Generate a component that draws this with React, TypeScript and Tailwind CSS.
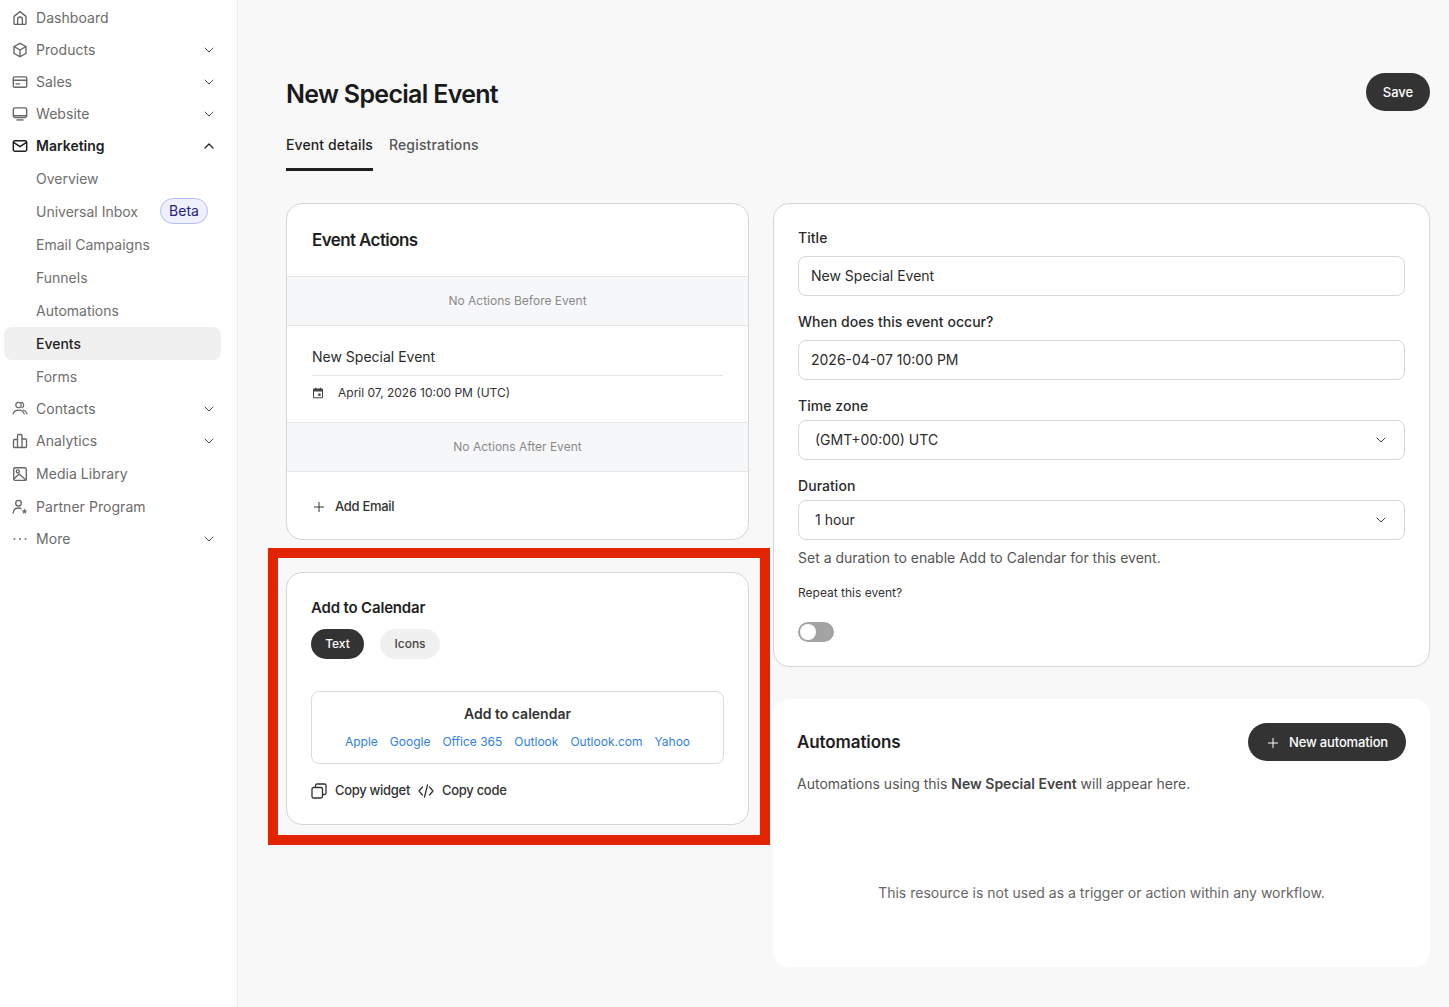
import { ChevronDown, ChevronUp, Plus } from "lucide-react";
import type { ReactNode } from "react";

const ic = {
  width: 16,
  height: 16,
  viewBox: "0 0 16 16",
  fill: "none",
  stroke: "currentColor",
  strokeWidth: 1.35,
  strokeLinecap: "round" as const,
  strokeLinejoin: "round" as const,
};

const HomeIcon = () => (
  <svg {...ic}>
    <path d="M2 6.400 8 1.600l6 4.800v7a1 1 0 0 1-1 1H3a1 1 0 0 1-1-1z" />
    <path d="M5.600 14.400V9.400a2.400 2.400 0 0 1 4.800 0v5" />
  </svg>
);
const BoxIcon = () => (
  <svg {...ic}>
    <path d="M8 1.300 14 4.500v7L8 14.700l-6-3.200v-7z" />
    <path d="M2.200 4.700 8 8l5.800-3.300M8 8v6.500" />
  </svg>
);
const CardIcon = () => (
  <svg {...ic}>
    <rect x="1.300" y="2.800" width="13.400" height="10.400" rx="1.200" />
    <path d="M1.300 6.200h13.400M4 9.800h3.600" />
  </svg>
);
const MonitorIcon = () => (
  <svg {...ic}>
    <rect x="1.300" y="1.800" width="13.400" height="9.800" rx="1.800" />
    <path d="M1.500 9.700h13" strokeWidth={1.6} />
    <path d="M5.200 13.900h5.600" strokeWidth={1.9} stroke="#888" />
  </svg>
);
const MailIcon = () => (
  <svg {...ic} strokeWidth={1.5}>
    <rect x="1.300" y="2.800" width="13.400" height="10.400" rx="1.600" />
    <path d="M1.600 4.300 8 8.700l6.400-4.400" />
  </svg>
);
const ContactsIcon = () => (
  <svg {...ic} strokeWidth={1.15}>
    <circle cx="6.500" cy="4" r="2.700" />
    <path d="M9.300 1.400a2.700 2.700 0 0 1 .7 5.200" />
    <path d="M1 13c.8-2.500 3-3.900 5.500-3.900 2.700 0 4.800 1.300 5.700 3.700" />
    <path d="M11.400 9c1.600.6 2.900 1.900 3.600 3.900" />
  </svg>
);
const AnalyticsIcon = () => (
  <svg {...ic}>
    <path d="M5.500 14.500h-3a1 1 0 0 1-1-1V7.500a1 1 0 0 1 1-1h3" />
    <rect x="5.500" y="1.500" width="4.500" height="13" rx="1.200" />
    <path d="M10 6h3.500a1 1 0 0 1 1 1v6.500a1 1 0 0 1-1 1H10" />
  </svg>
);
const MediaIcon = () => (
  <svg {...ic}>
    <rect x="1.700" y="1.700" width="12.600" height="12.600" rx="1.400" />
    <circle cx="5.800" cy="5.400" r="1.500" />
    <path d="M2 12.800 7.200 8l6.800 6" />
  </svg>
);
const PartnerIcon = () => (
  <svg {...ic}>
    <circle cx="6.500" cy="4.200" r="2.800" />
    <path d="M1.200 14c.2-3 2.400-5 5.300-5 .9 0 1.800.2 2.500.6" />
    <path
      d="m12.500 10 .7 1.500 1.600.2-1.200 1.100.3 1.600-1.400-.8-1.400.8.3-1.600-1.200-1.100 1.600-.2z"
      fill="currentColor"
      strokeWidth={0.4}
    />
  </svg>
);
const DotsIcon = () => (
  <svg width="16" height="16" viewBox="0 0 16 16" fill="#777">
    <circle cx="2.500" cy="8" r="1" />
    <circle cx="8" cy="8" r="1" />
    <circle cx="13.500" cy="8" r="1" />
  </svg>
);

type RowProps = { label: string; icon?: ReactNode; chevron?: boolean; tall?: boolean };

function NavRow({ label, icon, chevron, tall }: RowProps) {
  return (
    <div className={`flex items-center pr-5 pl-3 text-[#6b6b6b] ${tall ? "h-[33px]" : "h-8"}`}>
      <span className="flex w-6 shrink-0 items-center text-[#666]">{icon}</span>
      <span className="flex-1 text-sm tracking-[0.05px]">{label}</span>
      {chevron && <ChevronDown size={16} strokeWidth={1.5} className="text-[#555]" />}
    </div>
  );
}

function SubRow({ label, active, children }: { label: string; active?: boolean; children?: ReactNode }) {
  return (
    <div
      className={`mr-4 ml-1 flex h-[33px] items-center rounded-lg pl-8 text-sm ${
        active ? "bg-[#f0f0f0] font-medium text-[#1f1f1f]" : "text-[#6f6f6f]"
      }`}
    >
      {label}
      {children}
    </div>
  );
}

function Sidebar() {
  return (
    <aside className="w-[238px] shrink-0 border-r border-[#ededed] bg-white pt-[2px]">
      <NavRow label="Dashboard" icon={<HomeIcon />} />
      <NavRow label="Products" icon={<BoxIcon />} chevron />
      <NavRow label="Sales" icon={<CardIcon />} chevron />
      <NavRow label="Website" icon={<MonitorIcon />} chevron />
      <div className="flex h-8 items-center pr-5 pl-3 text-[#1f1f1f]">
        <span className="flex w-6 shrink-0 items-center">
          <MailIcon />
        </span>
        <span className="flex-1 text-sm font-semibold">Marketing</span>
        <ChevronUp size={16} strokeWidth={1.8} />
      </div>
      <SubRow label="Overview" />
      <SubRow label="Universal Inbox">
        <span className="mb-[1px] ml-[22px] flex h-[26px] w-12 items-center justify-center rounded-full border border-[#b4bdf5] bg-[#eef0fe] text-sm text-[#27237e]">
          Beta
        </span>
      </SubRow>
      <SubRow label="Email Campaigns" />
      <SubRow label="Funnels" />
      <SubRow label="Automations" />
      <SubRow label="Events" active />
      <SubRow label="Forms" />
      <NavRow label="Contacts" icon={<ContactsIcon />} chevron />
      <NavRow label="Analytics" icon={<AnalyticsIcon />} chevron />
      <NavRow label="Media Library" icon={<MediaIcon />} tall />
      <NavRow label="Partner Program" icon={<PartnerIcon />} tall />
      <NavRow label="More" icon={<DotsIcon />} chevron />
    </aside>
  );
}

function EventActions() {
  return (
    <div className="overflow-hidden rounded-[16px] border border-[#d6d6d6] bg-white">
      <div className="flex h-[72px] items-center px-[25px] pt-[2px] text-[17px] font-semibold tracking-[-0.6px] text-[#1f1f1f]">
        Event Actions
      </div>
      <div className="flex h-[50px] items-center justify-center border-y border-[#e5e5e5] bg-[#f6f7f9] text-xs text-[#8a8a8a]">
        No Actions Before Event
      </div>
      <div className="h-[96px] px-[25px]">
        <div className="flex h-[50px] items-end border-b border-[#e5e5e5] pb-[8px] text-sm text-[#2b2b2b]">
          New Special Event
        </div>
        <div className="flex h-[34px] items-center gap-[14px] text-xs text-[#333]">
          <svg width="12" height="12" viewBox="0 0 12 12">
            <path
              d="M2 1.500h1V.8h1.200v.7h3.600V.8H9v.7h1a1 1 0 0 1 1 1v7.700a1 1 0 0 1-1 1H2a1 1 0 0 1-1-1V2.500a1 1 0 0 1 1-1zm0 3v5.700h8V4.500z"
              fill="#444"
              fillRule="evenodd"
            />
            <rect x="6.200" y="6.500" width="2.400" height="2.400" fill="#444" />
          </svg>
          April 07, 2026 10:00 PM (UTC)
        </div>
      </div>
      <div className="flex h-[50px] items-center justify-center border-y border-[#e5e5e5] bg-[#f6f7f9] text-xs text-[#8a8a8a]">
        No Actions After Event
      </div>
      <div className="flex h-[67px] items-center gap-[8px] px-[25px] pt-[2px] text-[13px] font-medium tracking-[-0.3px] text-[#333]">
        <Plus size={16} strokeWidth={1.5} className="-ml-[1px]" />
        Add Email
      </div>
    </div>
  );
}

const links = ["Apple", "Google", "Office 365", "Outlook", "Outlook.com", "Yahoo"];

function AddToCalendar() {
  return (
    <div className="rounded-[16px] border border-[#d6d6d6] bg-white px-6 pt-[24px] pb-[23px]">
      <div className="text-[15px] leading-[22px] font-semibold tracking-[-0.17px] text-[#1f1f1f]">
        Add to Calendar
      </div>
      <div className="mt-[10px] flex gap-4">
        <span className="flex h-[30px] w-[53px] items-center justify-center rounded-full bg-[#333] text-xs font-medium text-white">
          Text
        </span>
        <span className="flex h-[30px] w-[60px] items-center justify-center rounded-full bg-[#f0f0f0] text-xs font-medium text-[#444]">
          Icons
        </span>
      </div>
      <div className="mt-8 flex h-[73px] flex-col items-center rounded-lg border border-[#dcdcdc] pt-[12px]">
        <div className="text-sm leading-5 font-semibold text-[#333]">Add to calendar</div>
        <div className="mt-[10px] flex gap-3 text-xs leading-4 text-[#2f7fe6]">
          {links.map((l) => (
            <span key={l}>{l}</span>
          ))}
        </div>
      </div>
      <div className="mt-[17px] flex h-[20px] items-center text-[13px] font-medium tracking-[-0.3px] text-[#333]">
        <svg width="16" height="16" viewBox="0 0 16 16" fill="none" stroke="#333" strokeWidth="1.300">
          <rect x="1" y="4.500" width="10.500" height="10.500" rx="1.500" />
          <path d="M4.500 4.500V2.500a1.500 1.500 0 0 1 1.500-1.500h7.500A1.500 1.500 0 0 1 15 2.500V10a1.500 1.500 0 0 1-1.500 1.500h-2" />
        </svg>
        <span className="ml-2">Copy widget</span>
        <svg
          width="16"
          height="16"
          viewBox="0 0 16 16"
          fill="none"
          stroke="#333"
          strokeWidth="1.300"
          className="ml-[8px]"
          strokeLinecap="round"
          strokeLinejoin="round"
        >
          <path d="M4.500 4 1 8l3.500 4M11.500 4 15 8l-3.500 4M9.500 2 6.500 14" />
        </svg>
        <span className="ml-2">Copy code</span>
      </div>
    </div>
  );
}

function Label({ children }: { children: ReactNode }) {
  return <div className="text-sm leading-5 font-medium tracking-[0.05px] text-[#2b2b2b]">{children}</div>;
}

function Field({ children, select }: { children: ReactNode; select?: boolean }) {
  return (
    <div
      className={`flex h-10 items-center rounded-lg border border-[#d6d6d6] bg-white text-sm text-[#2b2b2b] ${
        select ? "justify-between pr-[15px] pl-4" : "px-3"
      }`}
    >
      {children}
      {select && <ChevronDown size={16} strokeWidth={1.5} className="text-[#444]" />}
    </div>
  );
}

function EventForm() {
  return (
    <div className="rounded-[16px] border border-[#d6d6d6] bg-white px-6 pt-6 pb-6">
      <Label>Title</Label>
      <div className="mt-2">
        <Field>New Special Event</Field>
      </div>
      <div className="mt-4">
        <Label>When does this event occur?</Label>
      </div>
      <div className="mt-2">
        <Field>2026-04-07 10:00 PM</Field>
      </div>
      <div className="mt-4">
        <Label>Time zone</Label>
      </div>
      <div className="mt-1">
        <Field select>(GMT+00:00) UTC</Field>
      </div>
      <div className="mt-4">
        <Label>Duration</Label>
      </div>
      <div className="mt-1">
        <Field select>1 hour</Field>
      </div>
      <div className="mt-2 text-sm leading-5 text-[#555]">
        Set a duration to enable Add to Calendar for this event.
      </div>
      <div className="mt-[17px] text-xs leading-4 text-[#333]">Repeat this event?</div>
      <div className="mt-[21px] flex h-5 w-9 items-center rounded-full bg-[#a3a3a3] pl-[2px]">
        <span className="h-4 w-4 rounded-full bg-white" />
      </div>
    </div>
  );
}

function AutomationsCard() {
  return (
    <div className="h-[268px] rounded-[16px] bg-white px-6 pt-6">
      <div className="flex items-center justify-between">
        <div className="pt-[2px] text-[17px] font-semibold tracking-[-0.1px] text-[#1f1f1f]">Automations</div>
        <div className="flex h-[38px] w-[158px] items-center justify-center gap-[8px] rounded-full bg-[#333] pt-[1px] text-[13px] font-medium tracking-[-0.15px] text-white">
          <Plus size={16} strokeWidth={1.5} className="-ml-[1px]" />
          New automation
        </div>
      </div>
      <div className="mt-[13px] text-sm leading-5 text-[#555]">
        Automations using this <span className="font-semibold text-[#444]">New Special Event</span> will appear here.
      </div>
      <div className="mt-[89px] text-center text-sm leading-5 text-[#666]">
        This resource is not used as a trigger or action within any workflow.
      </div>
    </div>
  );
}

export default function App() {
  return (
    <div className="relative flex min-h-[1007px] bg-[#f8f8f8] font-['Inter',sans-serif]">
      <Sidebar />
      <main className="flex-1 pt-[73px] pr-[19px] pl-[48px]">
        <div className="flex items-start justify-between">
          <h1 className="pt-[4px] text-[25px] leading-[34px] font-semibold tracking-[-0.7px] text-[#1a1a1a]">
            New Special Event
          </h1>
          <div className="flex h-[38px] w-16 items-center justify-center rounded-full bg-[#333] pt-[2px] text-[13px] font-medium text-white">
            Save
          </div>
        </div>
        <div className="mt-[19px] flex gap-4 text-sm font-medium tracking-[0.1px]">
          <div className="h-[41px] border-b-[3px] border-[#1f1f1f] pt-[5px] text-[#1f1f1f]">Event details</div>
          <div className="pt-[5px] tracking-[0.17px] text-[#555]">Registrations</div>
        </div>
        <div className="mt-8 flex gap-6">
          <div className="flex w-[463px] shrink-0 flex-col gap-8">
            <EventActions />
            <AddToCalendar />
          </div>
          <div className="flex flex-1 flex-col gap-8">
            <EventForm />
            <AutomationsCard />
          </div>
        </div>
      </main>
      <div className="pointer-events-none absolute top-[548px] left-[268px] h-[297px] w-[502px] border-[10px] border-[#e32400]" />
    </div>
  );
}
